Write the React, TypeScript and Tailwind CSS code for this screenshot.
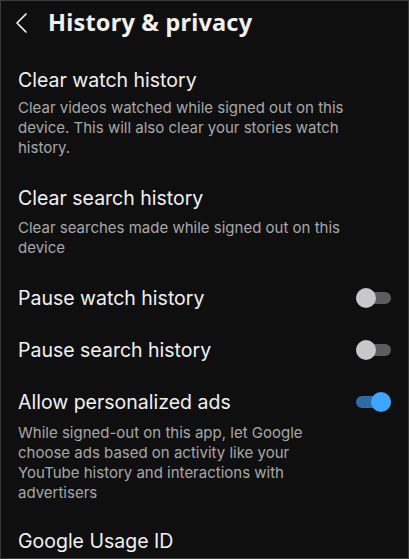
import React from "react";

function Toggle({ on }: { on: boolean }) {
  return (
    <div className="relative w-[35px] h-[20px] flex items-center shrink-0">
      <div className={`w-[35px] h-[12px] rounded-full ${on ? "bg-[#2f6aa6]" : "bg-[#5c5c5c]"}`} />
      <div
        className={`absolute top-0 w-[20px] h-[20px] rounded-full ${on ? "right-0 bg-[#3ea6ff]" : "left-0 bg-[#c8c8cc]"}`}
      />
    </div>
  );
}

export default function App() {
  return (
    <div
      className="w-[409px] h-[559px] bg-[#0f0f0f] text-[#f1f1f1] overflow-hidden border border-[#3a3a3a] box-border"
      style={{ fontFamily: "Inter, 'Noto Sans', sans-serif" }}
    >
      <div className="h-[44px] flex items-center pl-[14px]">
        <svg width="14" height="22" viewBox="0 0 14 22" className="mr-[19px]">
          <path d="M11 2 L2 11 L11 20" fill="none" stroke="#f1f1f1" strokeWidth="1.7" strokeLinecap="round" strokeLinejoin="round" />
        </svg>
        <div className="text-[23.5px] font-bold tracking-[0.2px]" style={{ fontFamily: "'Noto Sans', Inter, sans-serif" }}>
          History &amp; privacy
        </div>
      </div>

      <div className="px-[17px] mt-[23px]">
        <div className="text-[19.5px] leading-[24px]">Clear watch history</div>
        <div className="mt-[6px] text-[15px] leading-[20px] text-[#a8a8a8]">
          Clear videos watched while signed out on this device. This will also clear your stories watch history.
        </div>
      </div>

      <div className="px-[17px] mt-[28px]">
        <div className="text-[19.5px] leading-[24px]">Clear search history</div>
        <div className="mt-[8px] text-[15px] leading-[20px] text-[#a8a8a8]">
          Clear searches made while signed out on this device
        </div>
      </div>

      <div className="px-[17px] mt-[14px] h-[52px] flex items-center justify-between">
        <div className="text-[19.5px] leading-[24px]">Pause watch history</div>
        <Toggle on={false} />
      </div>
      <div className="px-[17px] h-[52px] flex items-center justify-between">
        <div className="text-[19.5px] leading-[24px]">Pause search history</div>
        <Toggle on={false} />
      </div>

      <div className="px-[17px] mt-[14px] flex items-center justify-between">
        <div className="text-[19.5px] leading-[24px]">Allow personalized ads</div>
        <Toggle on={true} />
      </div>
      <div className="px-[17px] mt-[9px] text-[15px] leading-[20px] text-[#a8a8a8] pr-[100px]">
        While signed-out on this app, let Google choose ads based on activity like your YouTube history and interactions with advertisers
      </div>

      <div className="px-[17px] mt-[26px]">
        <div className="text-[19.5px] leading-[24px]">Google Usage ID</div>
      </div>
    </div>
  );
}
